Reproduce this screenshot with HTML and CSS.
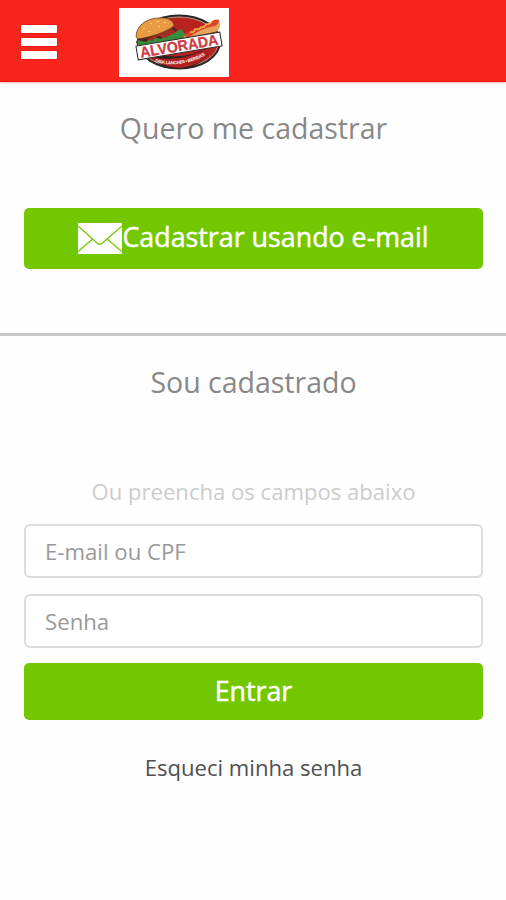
FILE: index.html
```html
<!DOCTYPE html>
<html lang="pt-BR">
<head>
<meta charset="utf-8">
<meta name="viewport" content="width=device-width, initial-scale=1">
<title>Alvorada - Cadastro</title>
<link rel="stylesheet" href="styles.css">
</head>
<body>
<header class="topbar">
  <button class="menu" type="button"><span class="bar"></span><span class="bar"></span><span class="bar"></span></button>
  <svg class="logo" viewBox="0 0 110 69">
    <rect width="110" height="69" fill="#fff"/>
    <ellipse cx="60" cy="34" rx="42" ry="27.5" fill="#292522"/>
    <ellipse cx="60" cy="34" rx="39.5" ry="25" fill="#b9231e" stroke="#ddd0c0" stroke-width=".7"/>
    <path d="M29 43Q60 56 92 38Q85 60 60 61Q37 60 29 43Z" fill="#2d2320"/>
    <path d="M32 49Q61 56 91 39Q87 57 61 60Q42 59 32 49Z" fill="#b32020"/>
    <path d="M19 30L52 17L58 22L54 28L64 25L68 30L20 41L17 34Z" fill="#47251b"/>
    <path d="M18 32L27 34L33 29L42 31L48 25L55 25L62 21L67 27L64 34L20 41Z" fill="#398c3b"/>
    <path d="M28 31L52 20L57 24L46 30L39 28L33 33Z" fill="#a42c23"/>
    <path d="M17 29C17 18 27 10 40 10C49 9 55 13 55 18C47 24 33 29 19 31Z" fill="#e99b43" stroke="#59371f" stroke-width=".7"/>
    <path d="M24 21l2-1M31 15l2 1M38 14l2-1M45 15l2-1M39 19l2-1M29 24l2-1" stroke="#ffdb91" stroke-width="1"/>
    <path d="M64 29Q82 17 99 12Q103 16 99 23Q83 27 69 31Z" fill="#e7a25b"/>
    <path d="M65 27Q76 19 88 17Q96 10 100 12Q101 15 96 18Q82 20 69 30Z" fill="#dc4527"/>
    <path d="M71 24q5 1 5-3q5 1 6-2q4 1 5-3q4 1 6-3" fill="none" stroke="#f6c04e" stroke-width="1.2"/>
    <g transform="rotate(-9.5 60 38)">
      <rect x="17.5" y="31" width="85" height="14" fill="#fff" stroke="#292421" stroke-width="1"/>
      <text class="brand" x="20.5" y="43.2" textLength="79" lengthAdjust="spacingAndGlyphs">ALVORADA</text>
    </g>
    <path id="motto" d="M36 54Q62 61 89 46" fill="none"/>
    <text class="motto"><textPath href="#motto" textLength="52">DISK LANCHES • BEBIDAS</textPath></text>
  </svg>
</header>
<main>
  <section class="signup">
    <h1 class="title">Quero me cadastrar</h1>
    <button class="action email" type="button">
      <svg class="envelope" viewBox="0 0 44 31">
        <rect width="44" height="31" fill="#fff"/>
        <path d="M0 3L18.5 19.5Q21.5 23 25 19.5L44 3M0 28.5L14.5 16M44 28.5L29 16" fill="none" stroke="#73c700" stroke-width="1.3"/>
      </svg><span class="email-label">Cadastrar usando e-mail</span>
    </button>
  </section>
  <section class="login">
    <h2 class="title">Sou cadastrado</h2>
    <p class="hint">Ou preencha os campos abaixo</p>
    <form class="form">
      <input class="field" type="text" placeholder="E-mail ou CPF">
      <input class="field" type="password" placeholder="Senha">
      <button class="action enter" type="button"><span class="enter-label">Entrar</span></button>
    </form>
    <a class="forgot">Esqueci minha senha</a>
  </section>
</main>
</body>
</html>
```
FILE: styles.css
```css
* { box-sizing: border-box; }
body {
  margin: 0;
  min-height: 900px;
  background: #fefefe;
  font-family: "Open Sans", sans-serif;
}
button { border: 0; padding: 0; font-family: inherit; }
.topbar {
  display: flex;
  align-items: flex-start;
  height: 82px;
  padding: 8px 0 0 21px;
  background: #f9251c;
  border-bottom: 1px solid #e3120c;
  box-shadow: 0 1px 2px #f9b5b2;
}
.menu {
  display: flex;
  flex-direction: column;
  gap: 5px;
  width: 36px;
  margin-top: 17px;
  background: transparent;
}
.bar { display: block; height: 8px; border-radius: 1px; background: #fff; box-shadow: 0 0 2px #d60000; }
.logo { width: 110px; height: 69px; margin-left: 62px; }
.brand { font: 700 15px "Liberation Sans", sans-serif; fill: #cf3b45; stroke: #cf3b45; stroke-width: .3px; }
.motto { font: 700 4.5px "Liberation Sans", sans-serif; fill: #fff; }
.signup { height: 254px; padding: 26px 23px 0 24px; border-bottom: 3px solid #c8c8c8; }
.title { margin: 0; text-align: center; font-size: 28.5px; font-weight: 400; line-height: 40px; color: #888; }
.action {
  display: flex;
  align-items: center;
  justify-content: center;
  width: 100%;
  border-radius: 5px;
  background: #73c700;
  color: #fff;
  font-size: 26.8px;
  font-weight: 400;
  line-height: 36px;
  -webkit-text-stroke: 0.5px #fff;
}
.email { height: 61px; margin-top: 60px; }
.envelope { width: 44px; height: 31px; flex: none; }
.email-label { margin-top: -4px; white-space: nowrap; }
.enter-label { margin-top: -1px; }
.login { display: flex; flex-direction: column; padding: 26px 23px 0 24px; }
.hint { margin: 73px 0 0; text-align: center; font-size: 22.1px; line-height: 32px; color: #ccc; }
.form { display: flex; flex-direction: column; gap: 16px; margin-top: 17px; }
.field {
  width: 100%;
  height: 54px;
  padding: 0 19px;
  border: 2px solid #dcdcdc;
  border-radius: 6px;
  background: #fff;
  font: 400 22.2px "Open Sans", sans-serif;
  color: #555;
}
.field::placeholder { color: #999; opacity: 1; }
.enter { height: 57px; margin-top: -1px; }
.forgot { margin-top: 31px; text-align: center; font-size: 22.1px; line-height: 32px; color: #505050; }
```
